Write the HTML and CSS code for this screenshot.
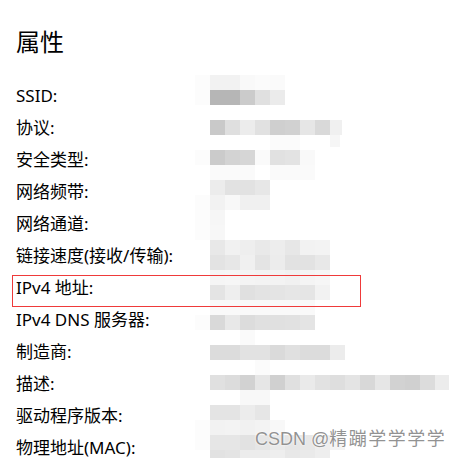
FILE: index.html
```html
<!DOCTYPE html>
<html lang="zh-CN">
<head>
	<meta charset="UTF-8">
	<title>属性</title>
	<link rel="stylesheet" href="styles.css">
</head>
<body>
	<div class="panel">
		<div class="labels">
			<h1 class="title">属性</h1>
			<ul class="props">
				<li>SSID:</li>
				<li>协议:</li>
				<li>安全类型:</li>
				<li>网络频带:</li>
				<li>网络通道:</li>
				<li>链接速度(接收/传输):</li>
				<li class="marked">IPv4 地址:</li>
				<li>IPv4 DNS 服务器:</li>
				<li>制造商:</li>
				<li>描述:</li>
				<li>驱动程序版本:</li>
				<li>物理地址(MAC):</li>
			</ul>
		</div>
		<!-- pixelated values -->
		<svg class="blur" width="255" height="383" viewBox="0 0 255 383">
			<g shape-rendering="crispEdges">
				<rect x="0" y="0" width="15" height="30" fill="#fcfcfc"/>
				<rect x="15" y="0" width="15" height="15" fill="#f2f2f2"/>
				<rect x="30" y="0" width="15" height="15" fill="#f2f2f2"/>
				<rect x="45" y="0" width="15" height="15" fill="#f9f9f9"/>
				<rect x="60" y="0" width="15" height="15" fill="#fbfbfb"/>
				<rect x="75" y="0" width="15" height="15" fill="#fafafa"/>
				<rect x="15" y="15" width="15" height="15" fill="#b6b6b6"/>
				<rect x="30" y="15" width="15" height="15" fill="#b6b6b6"/>
				<rect x="45" y="15" width="15" height="15" fill="#cbcbcb"/>
				<rect x="60" y="15" width="15" height="15" fill="#e0e0e0"/>
				<rect x="75" y="15" width="15" height="15" fill="#ebebeb"/>

				<rect x="15" y="45" width="15" height="15" fill="#c9c9c9"/>
				<rect x="30" y="45" width="15" height="15" fill="#dfdfdf"/>
				<rect x="45" y="45" width="15" height="15" fill="#ececec"/>
				<rect x="60" y="45" width="15" height="15" fill="#e1e1e1"/>
				<rect x="75" y="45" width="15" height="15" fill="#cfcfcf"/>
				<rect x="90" y="45" width="15" height="15" fill="#d1d1d1"/>
				<rect x="105" y="45" width="15" height="15" fill="#e6e6e6"/>
				<rect x="120" y="45" width="15" height="15" fill="#d9d9d9"/>
				<rect x="135" y="45" width="12" height="15" fill="#f0f0f0"/>
				<rect x="75" y="60" width="30" height="15" fill="#fbfbfb"/>
				<rect x="135" y="60" width="10" height="12" fill="#f6f6f6"/>

				<rect x="0" y="75" width="15" height="15" fill="#fcfcfc"/>
				<rect x="15" y="75" width="15" height="15" fill="#cbcbcb"/>
				<rect x="30" y="75" width="15" height="15" fill="#d3d3d3"/>
				<rect x="45" y="75" width="15" height="15" fill="#d6d6d6"/>
				<rect x="60" y="75" width="15" height="15" fill="#fafafa"/>
				<rect x="75" y="75" width="15" height="15" fill="#e1e1e1"/>
				<rect x="90" y="75" width="15" height="15" fill="#e3e3e3"/>
				<rect x="105" y="75" width="15" height="15" fill="#f9f9f9"/>
				<rect x="15" y="90" width="45" height="15" fill="#fafafa"/>
				<rect x="75" y="90" width="45" height="15" fill="#fafafa"/>

				<rect x="15" y="105" width="15" height="15" fill="#ececec"/>
				<rect x="30" y="105" width="15" height="15" fill="#e2e2e2"/>
				<rect x="45" y="105" width="15" height="15" fill="#e2e2e2"/>
				<rect x="60" y="105" width="15" height="15" fill="#e7e7e7"/>
				<rect x="0" y="120" width="15" height="45" fill="#fcfcfc"/>
				<rect x="15" y="120" width="15" height="15" fill="#f2f2f2"/>
				<rect x="30" y="120" width="15" height="15" fill="#f8f8f8"/>
				<rect x="45" y="120" width="15" height="15" fill="#f0f0f0"/>
				<rect x="60" y="120" width="15" height="15" fill="#f0f0f0"/>
				<rect x="15" y="135" width="15" height="15" fill="#f6f6f6"/>
				<rect x="15" y="150" width="15" height="15" fill="#f7f7f7"/>

				<rect x="15" y="165" width="15" height="15" fill="#e8e8e8"/>
				<rect x="30" y="165" width="15" height="15" fill="#f1f1f1"/>
				<rect x="45" y="165" width="15" height="15" fill="#eeeeee"/>
				<rect x="60" y="165" width="15" height="15" fill="#e9e9e9"/>
				<rect x="75" y="165" width="15" height="15" fill="#ededed"/>
				<rect x="90" y="165" width="15" height="15" fill="#e7e7e7"/>
				<rect x="105" y="165" width="15" height="15" fill="#f2f2f2"/>
				<rect x="120" y="165" width="15" height="15" fill="#f3f3f3"/>
				<rect x="15" y="180" width="15" height="15" fill="#e3e3e3"/>
				<rect x="30" y="180" width="15" height="15" fill="#e7e7e7"/>
				<rect x="45" y="180" width="15" height="15" fill="#f0f0f0"/>
				<rect x="60" y="180" width="15" height="15" fill="#e4e4e4"/>
				<rect x="75" y="180" width="15" height="15" fill="#ececec"/>
				<rect x="90" y="180" width="15" height="15" fill="#e2e2e2"/>
				<rect x="105" y="180" width="15" height="15" fill="#e2e2e2"/>
				<rect x="120" y="180" width="15" height="15" fill="#e8e8e8"/>

				<rect x="15" y="195" width="15" height="15" fill="#f5f5f5"/>
				<rect x="30" y="195" width="15" height="15" fill="#f6f6f6"/>
				<rect x="45" y="195" width="15" height="15" fill="#f4f4f4"/>
				<rect x="60" y="195" width="15" height="15" fill="#f3f3f3"/>
				<rect x="75" y="195" width="15" height="15" fill="#f3f3f3"/>
				<rect x="90" y="195" width="15" height="15" fill="#f1f1f1"/>
				<rect x="105" y="195" width="15" height="15" fill="#f4f4f4"/>
				<rect x="120" y="195" width="15" height="15" fill="#f6f6f6"/>
				<rect x="15" y="210" width="15" height="15" fill="#e4e4e4"/>
				<rect x="30" y="210" width="15" height="15" fill="#eeeeee"/>
				<rect x="45" y="210" width="15" height="15" fill="#e0e0e0"/>
				<rect x="60" y="210" width="15" height="15" fill="#e3e3e3"/>
				<rect x="75" y="210" width="15" height="15" fill="#e4e4e4"/>
				<rect x="90" y="210" width="15" height="15" fill="#e6e6e6"/>
				<rect x="105" y="210" width="15" height="15" fill="#e5e5e5"/>
				<rect x="120" y="210" width="15" height="15" fill="#f2f2f2"/>
				<rect x="15" y="225" width="105" height="15" fill="#f9f9f9"/>

				<rect x="0" y="240" width="15" height="15" fill="#fcfcfc"/>
				<rect x="15" y="240" width="15" height="15" fill="#d9d9d9"/>
				<rect x="30" y="240" width="15" height="15" fill="#e8e8e8"/>
				<rect x="45" y="240" width="15" height="15" fill="#dcdcdc"/>
				<rect x="60" y="240" width="15" height="15" fill="#e0e0e0"/>
				<rect x="75" y="240" width="15" height="15" fill="#e0e0e0"/>
				<rect x="90" y="240" width="15" height="15" fill="#e1e1e1"/>
				<rect x="105" y="240" width="15" height="15" fill="#e4e4e4"/>
				<rect x="45" y="255" width="15" height="15" fill="#fafafa"/>

				<rect x="15" y="270" width="15" height="15" fill="#dcdcdc"/>
				<rect x="30" y="270" width="15" height="15" fill="#dcdcdc"/>
				<rect x="45" y="270" width="15" height="15" fill="#e2e2e2"/>
				<rect x="60" y="270" width="15" height="15" fill="#e2e2e2"/>
				<rect x="75" y="270" width="15" height="15" fill="#dadada"/>
				<rect x="90" y="270" width="15" height="15" fill="#e0e0e0"/>
				<rect x="105" y="270" width="15" height="15" fill="#dcdcdc"/>
				<rect x="120" y="270" width="15" height="15" fill="#dcdcdc"/>
				<rect x="135" y="270" width="15" height="15" fill="#ececec"/>
				<rect x="60" y="285" width="15" height="15" fill="#fbfbfb"/>

				<rect x="15" y="300" width="15" height="15" fill="#e0e0e0"/>
				<rect x="30" y="300" width="15" height="15" fill="#dcdcdc"/>
				<rect x="45" y="300" width="15" height="15" fill="#d2d2d2"/>
				<rect x="60" y="300" width="15" height="15" fill="#e6e6e6"/>
				<rect x="75" y="300" width="15" height="15" fill="#d0d0d0"/>
				<rect x="90" y="300" width="15" height="15" fill="#e0e0e0"/>
				<rect x="105" y="300" width="15" height="15" fill="#eaeaea"/>
				<rect x="120" y="300" width="15" height="15" fill="#e2e2e2"/>
				<rect x="135" y="300" width="15" height="15" fill="#dedede"/>
				<rect x="150" y="300" width="15" height="15" fill="#e4e4e4"/>
				<rect x="165" y="300" width="15" height="15" fill="#d8d8d8"/>
				<rect x="180" y="300" width="15" height="15" fill="#e6e6e6"/>
				<rect x="195" y="300" width="15" height="15" fill="#d2d2d2"/>
				<rect x="210" y="300" width="15" height="15" fill="#d0d0d0"/>
				<rect x="225" y="300" width="15" height="15" fill="#dcdcdc"/>
				<rect x="240" y="300" width="14" height="15" fill="#ececec"/>
				<rect x="45" y="315" width="30" height="15" fill="#f8f8f8"/>

				<rect x="15" y="330" width="15" height="15" fill="#e4e4e4"/>
				<rect x="30" y="330" width="15" height="15" fill="#e4e4e4"/>
				<rect x="45" y="330" width="15" height="15" fill="#ececec"/>
				<rect x="60" y="330" width="15" height="15" fill="#e6e6e6"/>
				<rect x="0" y="345" width="15" height="30" fill="#fcfcfc"/>
				<rect x="15" y="345" width="15" height="15" fill="#f2f2f2"/>
				<rect x="30" y="345" width="15" height="15" fill="#f3f3f3"/>
				<rect x="45" y="345" width="15" height="15" fill="#f1f1f1"/>
				<rect x="60" y="345" width="15" height="15" fill="#f3f3f3"/>
				<rect x="75" y="345" width="15" height="15" fill="#f8f8f8"/>

				<rect x="15" y="360" width="15" height="15" fill="#e6e6e6"/>
				<rect x="30" y="360" width="15" height="15" fill="#e6e6e6"/>
				<rect x="45" y="360" width="15" height="15" fill="#e2e2e2"/>
				<rect x="60" y="360" width="15" height="15" fill="#e6e6e6"/>
				<rect x="75" y="360" width="15" height="15" fill="#eaeaea"/>
				<rect x="90" y="360" width="15" height="15" fill="#e6e6e6"/>
				<rect x="105" y="360" width="15" height="15" fill="#e8e8e8"/>
				<rect x="120" y="360" width="15" height="15" fill="#eeeeee"/>
				<rect x="135" y="360" width="15" height="15" fill="#f4f4f4"/>
				<rect x="15" y="375" width="15" height="8" fill="#e2e2e2"/>
				<rect x="30" y="375" width="15" height="8" fill="#e4e4e4"/>
				<rect x="45" y="375" width="30" height="8" fill="#ececec"/>
				<rect x="75" y="375" width="15" height="8" fill="#eeeeee"/>
				<rect x="90" y="375" width="15" height="8" fill="#e8e8e8"/>
				<rect x="105" y="375" width="15" height="8" fill="#eaeaea"/>
				<rect x="120" y="375" width="15" height="8" fill="#eeeeee"/>
			</g>
		</svg>
	</div>
	<div class="watermark">CSDN @<span class="wm-name">精蹦学学学学</span></div>
</body>
</html>
```

FILE: styles.css
```css
html, body {
    margin: 0;
    background: #ffffff;
}
body {
    width: 462px;
    height: 458px;
    overflow: hidden;
    position: relative;
    color: #000000;
    font-family: "Noto Sans", "Noto Sans CJK SC", sans-serif;
}
.panel {
    display: flex;
    align-items: flex-start;
}
.labels {
    width: 179px;
    flex: none;
    padding: 26px 0 0 16px;
}
.title {
    margin: 0;
    font-size: 24px;
    line-height: 32px;
    font-weight: normal;
}
.props {
    list-style: none;
    margin: 22px 0 0;
    padding: 0;
}
.props li {
    height: 32px;
    line-height: 32px;
    font-size: 17px;
    white-space: nowrap;
    position: relative;
}
.props .marked::after {
    content: "";
    position: absolute;
    left: -4px;
    top: 3px;
    width: 347px;
    height: 30px;
    border: 1px solid #ef3a3a;
}
.blur {
    display: block;
    flex: none;
    margin-top: 75px;
}
.watermark {
    position: absolute;
    left: 255px;
    top: 428px;
    font-family: "Liberation Sans", "Noto Sans CJK SC", sans-serif;
    font-size: 18px;
    line-height: 22px;
    color: rgba(110, 110, 110, 0.75);
    text-shadow: 0 0 1px #ffffff, 0 0 2px #ffffff;
    white-space: nowrap;
}
.wm-name {
    letter-spacing: 1.5px;
}
```
